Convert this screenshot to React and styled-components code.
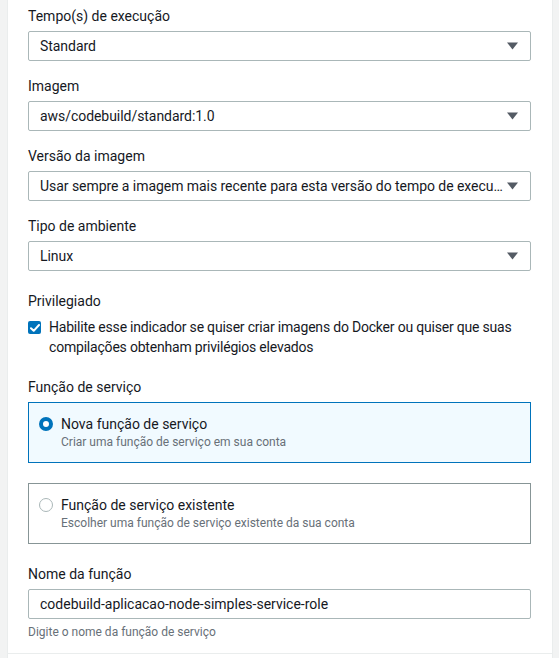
import React from "react"
import styled, { createGlobalStyle } from "styled-components"

const GlobalStyle = createGlobalStyle`
  body {
    margin: 0;
    background: #f2f3f3;
    font-family: Roboto, "Liberation Sans", Arial, sans-serif;
    color: #16191f;
  }
`

const fields = [
  { label: "Tempo(s) de execução", value: "Standard" },
  { label: "Imagem", value: "aws/codebuild/standard:1.0" },
  {
    label: "Versão da imagem",
    value: "Usar sempre a imagem mais recente para esta versão do tempo de execução",
  },
  { label: "Tipo de ambiente", value: "Linux" },
]

const roles = [
  {
    title: "Nova função de serviço",
    desc: "Criar uma função de serviço em sua conta",
    checked: true,
  },
  {
    title: "Função de serviço existente",
    desc: "Escolher uma função de serviço existente da sua conta",
    checked: false,
  },
]

const CaretIcon = () => (
  <svg width="11" height="8" viewBox="0 0 11 8">
    <path d="M0 0.5h11L5.5 7.5z" fill="#545b64" />
  </svg>
)

const CheckIcon = () => (
  <svg width="10" height="8" viewBox="0 0 10 8">
    <path
      d="M1 4.2l2.7 2.6L9 1"
      fill="none"
      stroke="#fff"
      strokeWidth="2"
      strokeLinecap="round"
      strokeLinejoin="round"
    />
  </svg>
)

const App = () => {
  return (
    <>
      <GlobalStyle />
      <Page>
        <Panel>
          {fields.map((field) => (
            <Field key={field.label}>
              <Label>{field.label}</Label>
              <Select>
                <SelectText>{field.value}</SelectText>
                <Caret>
                  <CaretIcon />
                </Caret>
              </Select>
            </Field>
          ))}

          <Field>
            <Label>Privilegiado</Label>
            <CheckRow>
              <CheckBox>
                <CheckIcon />
              </CheckBox>
              <CheckText>
                Habilite esse indicador se quiser criar imagens do Docker ou quiser que
                suas compilações obtenham privilégios elevados
              </CheckText>
            </CheckRow>
          </Field>

          <Field>
            <Label>Função de serviço</Label>
            <Cards>
              {roles.map((role) => (
                <RadioCard key={role.title} $active={role.checked}>
                  <Radio $active={role.checked} />
                  <CardBody>
                    <CardTitle>{role.title}</CardTitle>
                    <CardDesc>{role.desc}</CardDesc>
                  </CardBody>
                </RadioCard>
              ))}
            </Cards>
          </Field>

          <Field>
            <Label>Nome da função</Label>
            <Input>codebuild-aplicacao-node-simples-service-role</Input>
            <Help>Digite o nome da função de serviço</Help>
          </Field>

          <Divider />
        </Panel>
      </Page>
    </>
  )
}

export default App

const Page = styled.div`
  padding: 0 6px 0 7px;
  height: 658px;
  overflow: hidden;
`

const Panel = styled.div`
  background: #fff;
  border-left: 1px solid #eaeded;
  border-right: 1px solid #eaeded;
  padding: 6px 21px 40px 20px;
  display: flex;
  flex-direction: column;
`

const Field = styled.div`
  display: flex;
  flex-direction: column;
  margin-bottom: 20px;

  &:nth-child(-n + 3) {
    margin-bottom: 15px;
  }
`

const Label = styled.div`
  font-size: 14px;
  line-height: 20px;
  margin-bottom: 5px;
  color: #16191f;
`

const Select = styled.div`
  height: 30px;
  box-sizing: border-box;
  border: 1px solid #aab7b8;
  border-radius: 2px;
  display: flex;
  align-items: center;
  padding: 0 12px 0 11px;
  gap: 2px;
`

const SelectText = styled.span`
  flex: 1;
  min-width: 0;
  font-size: 14px;
  letter-spacing: -0.05px;
  white-space: nowrap;
  overflow: hidden;
  text-overflow: ellipsis;
`

const Caret = styled.span`
  display: flex;
  align-items: center;
  width: 11px;
`

const CheckRow = styled.div`
  display: flex;
  align-items: flex-start;
  gap: 8px;
  margin-top: 1px;
`

const CheckBox = styled.span`
  flex: none;
  width: 13px;
  height: 13px;
  margin-top: 4px;
  border-radius: 2px;
  background: #0073bb;
  display: flex;
  align-items: center;
  justify-content: center;
`

const CheckText = styled.div`
  font-size: 14px;
  line-height: 20px;
  letter-spacing: -0.2px;
`

const Cards = styled.div`
  display: flex;
  flex-direction: column;
  gap: 20px;
`

const RadioCard = styled.div`
  display: flex;
  align-items: flex-start;
  gap: 8px;
  padding: 11px 12px 12px 10px;
  border: 1px solid ${(p) => (p.$active ? "#0073bb" : "#879596")};
  background: ${(p) => (p.$active ? "#f1faff" : "#fff")};
`

const Radio = styled.span`
  flex: none;
  box-sizing: border-box;
  width: 14px;
  height: 14px;
  margin-top: 3px;
  border-radius: 50%;
  background: #fff;
  border: ${(p) => (p.$active ? "4.5px solid #0073bb" : "1px solid #aab7b8")};
`

const CardBody = styled.div`
  display: flex;
  flex-direction: column;
`

const CardTitle = styled.div`
  font-size: 14px;
  line-height: 20px;
`

const CardDesc = styled.div`
  font-size: 12px;
  line-height: 16px;
  color: #687078;
`

const Input = styled.div`
  height: 30px;
  box-sizing: border-box;
  border: 1px solid #aab7b8;
  border-radius: 2px;
  display: flex;
  align-items: center;
  padding: 0 11px;
  font-size: 14px;
`

const Help = styled.div`
  margin-top: 5px;
  font-size: 12px;
  line-height: 16px;
  color: #687078;
`

const Divider = styled.div`
  height: 1px;
  background: #eaeded;
  margin: -7px -21px 0 -20px;
`
